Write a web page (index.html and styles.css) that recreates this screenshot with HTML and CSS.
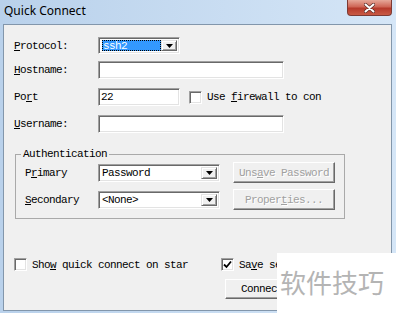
FILE: index.html
```html
<!DOCTYPE html>
<html lang="en">
<head>
    <meta charset="UTF-8">
    <title>Quick Connect</title>
    <link rel="stylesheet" href="styles.css">
</head>
<body>
    <div class="window">
        <div class="titlebar">
            <span class="title">Quick Connect</span>
            <div class="close-btn">
                <svg width="11" height="10" viewBox="0 0 11 10">
                    <path d="M1.5 1.5 L9.5 8.5 M9.5 1.5 L1.5 8.5" stroke="#5a2a25" stroke-width="3.4" stroke-linecap="round"/>
                    <path d="M1.5 1.5 L9.5 8.5 M9.5 1.5 L1.5 8.5" stroke="#fff" stroke-width="2" stroke-linecap="round"/>
                </svg>
            </div>
        </div>

        <div class="client">
            <div class="field-row row-first">
                <span class="field-label"><u>P</u>rotocol:</span>
                <div class="combo combo-protocol">
                    <span class="combo-value"><span class="selected">ssh2</span></span>
                    <span class="combo-btn"><svg width="7" height="4" viewBox="0 0 7 4"><polygon points="0,0 7,0 3.5,4" fill="#000"/></svg></span>
                </div>
            </div>

            <div class="field-row row-host">
                <span class="field-label"><u>H</u>ostname:</span>
                <div class="edit edit-wide"></div>
            </div>

            <div class="field-row">
                <span class="field-label">Po<u>r</u>t</span>
                <div class="edit edit-port">22</div>
                <span class="check check-firewall"></span>
                <span class="check-text">Use <u>f</u>irewall to con</span>
            </div>

            <div class="field-row">
                <span class="field-label"><u>U</u>sername:</span>
                <div class="edit edit-wide"></div>
            </div>

            <fieldset class="auth">
                <legend>Authentication</legend>
                <div class="auth-grid">
                    <span>P<u>r</u>imary</span>
                    <div class="combo">
                        <span class="combo-value">Password</span>
                        <span class="combo-btn"><svg width="7" height="4" viewBox="0 0 7 4"><polygon points="0,0 7,0 3.5,4" fill="#000"/></svg></span>
                    </div>
                    <div class="button disabled">Uns<u>a</u>ve Password</div>

                    <span><u>S</u>econdary</span>
                    <div class="combo">
                        <span class="combo-value">&lt;None&gt;</span>
                        <span class="combo-btn"><svg width="7" height="4" viewBox="0 0 7 4"><polygon points="0,0 7,0 3.5,4" fill="#000"/></svg></span>
                    </div>
                    <div class="button disabled">Proper<u>t</u>ies...</div>
                </div>
            </fieldset>

            <div class="bottom">
                <div class="bottom-left">
                    <label class="check-line">
                        <span class="check"></span>
                        <span class="check-text">Sho<u>w</u> quick connect on star</span>
                    </label>
                </div>
                <div class="bottom-right">
                    <label class="check-line">
                        <span class="check checked">
                            <svg width="9" height="9" viewBox="0 0 9 9"><path d="M1 4.5 L3.5 7 L8 1.5" stroke="#000" stroke-width="1.8" fill="none"/></svg>
                        </span>
                        <span class="check-text">Sa<u>v</u>e se</span>
                    </label>
                    <div class="button connect">Connec</div>
                </div>
            </div>
        </div>

        <!-- watermark over the bottom right corner -->
        <div class="watermark">软件技巧</div>
    </div>
</body>
</html>
```

FILE: styles.css
```css
/* window frame */
body {
    margin: 0;
    width: 396px;
    height: 313px;
    overflow: hidden;
    font-family: "Liberation Mono", monospace;
}

.window {
    position: relative;
    height: 313px;
    display: flex;
    flex-direction: column;
    background: linear-gradient(to right, #b9d1eb, #d5e6f7);
}

.titlebar {
    height: 24px;
    flex-shrink: 0;
    display: flex;
    justify-content: space-between;
    align-items: flex-start;
}

.title {
    font: 12px/21px "Noto Sans", sans-serif;
    padding-left: 4px;
    color: #000;
}

.close-btn {
    width: 45px;
    height: 16px;
    margin-right: 4px;
    box-sizing: border-box;
    border: 1px solid #7d3a33;
    border-top: none;
    border-radius: 0 0 4px 4px;
    background: linear-gradient(#e6a899, #cf6656 45%, #b63a2b 55%, #c85a45);
    display: flex;
    align-items: center;
    justify-content: center;
}

/* client area */
.client {
    flex: 1;
    margin: 0 4px 2px 3px;
    background: #f0f0f0;
    border: 1px solid #8296ab;
    padding: 12px 0 0 10px;
    font-size: 11px;
    line-height: 12px;
    letter-spacing: -0.6px;
    color: #000;
}

u {
    text-underline-offset: 1px;
}

.field-row {
    display: flex;
    align-items: center;
    height: 18px;
    margin-top: 9px;
}

.row-first {
    margin-top: 0;
    height: 17px;
}

.row-host {
    margin-top: 7px;
}

.field-label {
    width: 84px;
    flex-shrink: 0;
}

/* sunken edit boxes */
.edit,
.combo {
    box-sizing: border-box;
    height: 18px;
    background: #fff;
    border: 1px solid;
    border-color: #a0a0a0 #fff #fff #a0a0a0;
    box-shadow: inset 1px 1px 0 #696969, inset -1px -1px 0 #e3e3e3;
}

.edit {
    padding: 2px 0 0 2px;
}

.edit-wide {
    width: 186px;
}

.edit-port {
    width: 82px;
}

.combo {
    display: flex;
    align-items: stretch;
    width: 122px;
    padding: 2px;
}

.combo-protocol {
    width: 82px;
    height: 17px;
}

.combo-value {
    flex: 1;
    padding-left: 1px;
    display: flex;
    align-items: center;
    overflow: hidden;
    white-space: nowrap;
}

.selected {
    display: block;
    width: 100%;
    height: 100%;
    box-sizing: border-box;
    background: #3399ff;
    color: #fff;
    outline: 1px dotted #000;
    outline-offset: -1px;
    padding-left: 1px;
    line-height: 12px;
}

.combo-btn {
    width: 16px;
    flex-shrink: 0;
    box-sizing: border-box;
    background: #f0f0f0;
    border: 1px solid;
    border-color: #e3e3e3 #696969 #696969 #e3e3e3;
    box-shadow: inset 1px 1px 0 #fff, inset -1px -1px 0 #a0a0a0;
    display: flex;
    align-items: center;
    justify-content: center;
}

/* checkboxes */
.check {
    width: 13px;
    height: 13px;
    flex-shrink: 0;
    box-sizing: border-box;
    background: #fff;
    border: 1px solid;
    border-color: #a0a0a0 #fff #fff #a0a0a0;
    box-shadow: inset 1px 1px 0 #696969, inset -1px -1px 0 #e3e3e3;
    display: flex;
    align-items: center;
    justify-content: center;
}

.check-firewall {
    margin-left: 9px;
}

.check-text {
    margin-left: 5px;
    white-space: nowrap;
}

.check-line {
    display: flex;
    align-items: center;
    height: 13px;
}

/* raised buttons */
.button {
    box-sizing: border-box;
    height: 21px;
    background: #f0f0f0;
    border: 1px solid;
    border-color: #fff #696969 #696969 #fff;
    box-shadow: inset -1px -1px 0 #a0a0a0;
    display: flex;
    align-items: center;
    justify-content: center;
    white-space: nowrap;
}

.disabled {
    color: #a0a0a0;
    text-shadow: 1px 1px 0 #fff;
}

/* authentication group */
.auth {
    margin: 15px 0 0 1px;
    width: 330px;
    box-sizing: border-box;
    border: 1px solid #a9a9a9;
    padding: 2px 9px 8px 9px;
    min-width: 0;
}

.auth legend {
    padding: 0 2px;
    margin-left: -4px;
    line-height: 12px;
}

.auth-grid {
    display: grid;
    grid-template-columns: 73px 122px 115px;
    row-gap: 6px;
    grid-auto-rows: 21px;
    align-items: center;
}

.auth-grid .button {
    margin-left: 13px;
}

/* bottom options */
.bottom {
    display: flex;
    margin-top: 39px;
}

.bottom-left {
    width: 207px;
}

.bottom-right {
    display: flex;
    flex-direction: column;
    align-items: flex-start;
    gap: 8px;
}

.connect {
    width: 75px;
    height: 20px;
    margin-left: 4px;
    justify-content: flex-start;
    padding-left: 15px;
}

/* watermark */
.watermark {
    position: absolute;
    left: 277px;
    top: 253px;
    right: 0;
    bottom: 0;
    background: #fff;
    color: #b4b4b4;
    font: 26px/26px "Noto Sans CJK SC", sans-serif;
    padding: 16px 0 0 3px;
}
```
